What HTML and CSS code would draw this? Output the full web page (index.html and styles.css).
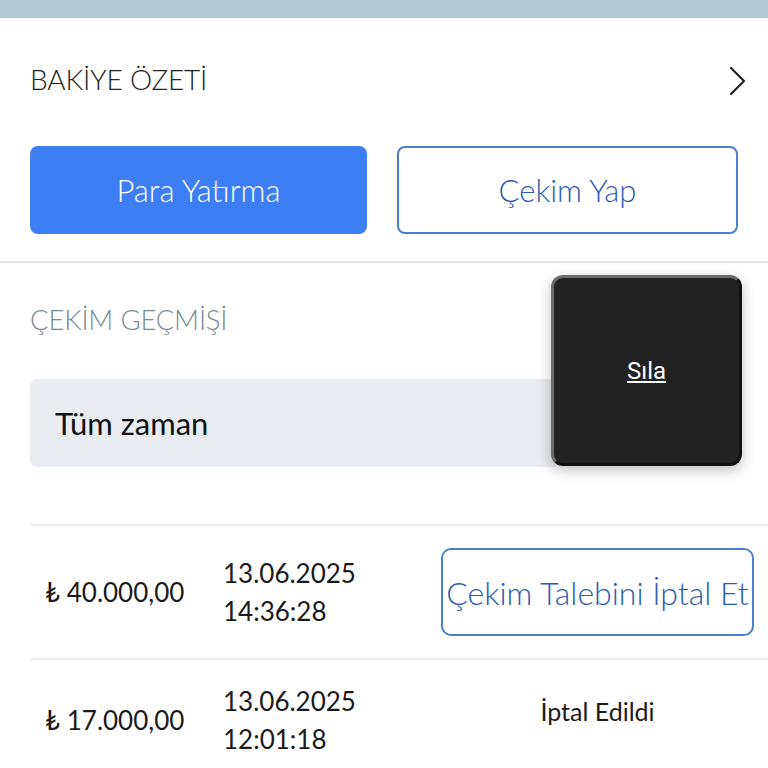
FILE: index.html
```html
<!DOCTYPE html>
<html lang="tr">
<head>
    <meta charset="UTF-8">
    <meta name="viewport" content="width=device-width, initial-scale=1.0">
    <title>Bakiye</title>
    <link rel="stylesheet" href="styles.css">
</head>
<body>

    <div class="top-bar"></div>

    <!-- Bakiye ozeti -->
    <div class="summary">
        <div class="summary-head">
            <span class="summary-title">BAKİYE ÖZETİ</span>
            <svg class="chevron" width="20" height="32" viewBox="0 0 20 32">
                <path d="M3 3 L16 16 L3 29" fill="none" stroke="#222" stroke-width="2.2" stroke-linecap="round" stroke-linejoin="round"/>
            </svg>
        </div>
        <div class="summary-buttons">
            <a href="#" class="btn btn-primary">Para Yatırma</a>
            <a href="#" class="btn btn-outline">Çekim Yap</a>
        </div>
    </div>

    <!-- Cekim gecmisi -->
    <div class="history">
        <div class="history-title">ÇEKİM GEÇMİŞİ</div>
        <div class="filter">Tüm zaman</div>

        <div class="popup"><a href="#">Sıla</a></div>

        <div class="history-list">
            <div class="history-row">
                <div class="amount">₺ 40.000,00</div>
                <div class="date">13.06.2025<br>14:36:28</div>
                <div class="status"><a href="#" class="cancel-btn">Çekim Talebini İptal Et</a></div>
            </div>
            <div class="history-row">
                <div class="amount">₺ 17.000,00</div>
                <div class="date">13.06.2025<br>12:01:18</div>
                <div class="status status-text">İptal Edildi</div>
            </div>
        </div>
    </div>

</body>
</html>
```

FILE: styles.css
```css
body {
    margin: 0;
    font-family: "Lato", "Noto Sans", sans-serif;
    background-color: #ffffff;
    color: #1b1b1b;
    overflow: hidden;
}

.top-bar {
    height: 18px;
    background-color: #b5c8d6;
}

.summary {
    padding: 0 30px;
    border-bottom: 2px solid #e6e9ec;
}

.summary-head {
    display: flex;
    align-items: center;
    justify-content: space-between;
    height: 122px;
}

.summary-title {
    font-size: 28px;
    font-weight: 300;
    color: #222;
    letter-spacing: -0.2px;
}

.chevron {
    margin-right: -10px;
    margin-top: 4px;
}

.summary-buttons {
    display: flex;
    gap: 30px;
    padding: 6px 0 27px;
}

.btn {
    flex: 1 1 0;
    height: 88px;
    display: flex;
    align-items: center;
    justify-content: center;
    font-size: 31px;
    font-weight: 300;
    text-decoration: none;
    border-radius: 8px;
    box-sizing: border-box;
}

.btn-primary {
    background-color: #3d7ef5;
    color: #ffffff;
}

.btn-outline {
    border: 2px solid #4a7fd0;
    color: #2a5bb0;
}

.history {
    position: relative;
    padding-left: 30px;
}

.history-title {
    font-size: 27.5px;
    font-weight: 300;
    color: #7b8a95;
    padding-top: 40px;
    height: 76px;
    letter-spacing: -0.2px;
}

.filter {
    width: 530px;
    height: 88px;
    box-sizing: border-box;
    background-color: #e8ecf0;
    border-radius: 8px;
    display: flex;
    align-items: center;
    padding-left: 25px;
    font-size: 31px;
    color: #111;
}

/* popup over de filter */
.popup {
    position: absolute;
    top: 12px;
    left: 551px;
    width: 191px;
    height: 191px;
    box-sizing: border-box;
    background-color: #222222;
    border-radius: 12px;
    border: 3px solid #111;
    border-top-color: #6a6a6a;
    border-left-color: #6a6a6a;
    box-shadow: 0 4px 14px rgba(0, 0, 0, 0.25);
    display: flex;
    align-items: center;
    justify-content: center;
}

.popup a {
    font-family: "Roboto", sans-serif;
    font-size: 24px;
    color: #ffffff;
}

.history-list {
    margin-top: 57px;
}

.history-row {
    display: flex;
    align-items: center;
    border-top: 2px solid #eceef0;
    padding: 22px 0;
}

.amount {
    width: 193px;
    padding-left: 15px;
    box-sizing: border-box;
    font-size: 26px;
}

.date {
    width: 218px;
    font-size: 26px;
    line-height: 38px;
}

.status {
    flex: 1;
    padding-right: 14px;
}

.cancel-btn {
    display: flex;
    align-items: center;
    justify-content: center;
    height: 88px;
    border: 2px solid #4a7fd0;
    border-radius: 10px;
    color: #2a5bb0;
    text-decoration: none;
    font-size: 32px;
    font-weight: 300;
    white-space: nowrap;
    overflow: visible;
    box-sizing: border-box;
}

.status-text {
    text-align: center;
    font-size: 25px;
    margin-top: -18px;
}
```
